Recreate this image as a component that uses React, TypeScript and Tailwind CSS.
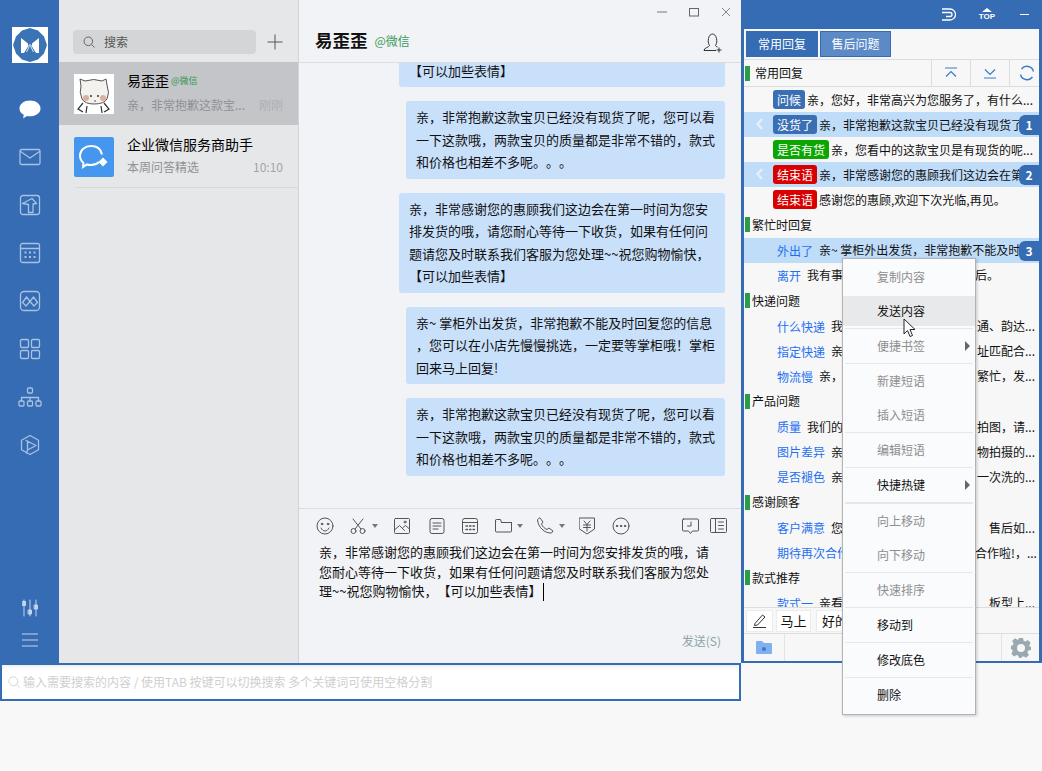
import React from "react";

const SB = "#a9c1e2";

function Ico({ w = 24, h = 24, vb, c = SB, sw = 1.3, children }: { w?: number; h?: number; vb?: string; c?: string; sw?: number; children: React.ReactNode }) {
  return (
    <svg width={w} height={h} viewBox={vb ?? `0 0 ${w} ${h}`} fill="none" stroke={c} strokeWidth={sw} strokeLinecap="round" strokeLinejoin="round">
      {children}
    </svg>
  );
}

const sideIcons = [
  <svg key="chat" width="24" height="24" viewBox="0 0 24 24"><path d="M12 3.500c5.800 0 10.500 3.400 10.500 8s-4.700 7.800-10.500 7.800c-1 0-2 0-3-.3L5.200 21.500l.5-3.700C3 16.400 1.500 14.200 1.500 11.500c0-4.600 4.700-8 10.500-8z" fill="#fff" /></svg>,
  <Ico key="mail" w={22} h={18}><rect x="1" y="1.500" width="20" height="15" rx="1.500" /><path d="M1.500 3.500L11 10l9.500-6.500" /></Ico>,
  <Ico key="up" w={22} h={22}><rect x="1.500" y="1.500" width="19" height="19" rx="2.500" /><path d="M3.500 9.500L13 4.500l4.500 5-3.500.5v8.500H9.500V10.500z" /></Ico>,
  <Ico key="cal" w={22} h={22}><rect x="1.500" y="1.500" width="19" height="19" rx="2" /><path d="M1.500 6.500h19" /><g strokeWidth="2" strokeLinecap="butt"><path d="M5.500 10.500h2M10 10.500h2M14.500 10.500h2M5.500 15h2M10 15h2M14.500 15h2" /></g></Ico>,
  <Ico key="mnt" w={22} h={22}><rect x="1.500" y="1.500" width="19" height="19" rx="3.500" /><path d="M3.500 12.500L7.500 7l3.500 4.500L14.500 7l4 5.500-3.500 3.500-4-4.500-4 4.500zM7.500 7l3.500 4.500" /></Ico>,
  <Ico key="grid" w={22} h={22}><rect x="1.500" y="1.500" width="8" height="8" rx="1.200" /><rect x="12.500" y="1.500" width="8" height="8" rx="1.200" /><rect x="1.500" y="12.500" width="8" height="8" rx="1.200" /><rect x="12.500" y="12.500" width="8" height="8" rx="1.200" /></Ico>,
  <Ico key="org" w={24} h={20}><rect x="9.500" y="1" width="5" height="5" rx="1" /><rect x="1" y="14" width="5" height="5" rx="1" /><rect x="9.500" y="14" width="5" height="5" rx="1" /><rect x="18" y="14" width="5" height="5" rx="1" /><path d="M3.500 14v-3.500h17V14M12 10.500V14" /></Ico>,
  <Ico key="hex" w={20} h={22}><path d="M10 1.500l8.500 4.700v9.600L10 20.500l-8.500-4.700V6.200z" /><path d="M6 6.500l10 5-8.500 4.500v-9M7.500 16l-1 3" /></Ico>,
];

function Tag({ t, c }: { t: string; c?: string }) {
  if (c) {
    return <span className="h-[19px] px-[4px] rounded-[3px] text-white leading-[19px] shrink-0" style={{ backgroundColor: c }}>{t}</span>;
  }
  return <span className="h-[19px] px-[4px] text-[#1d6ff2] leading-[19px] shrink-0">{t}</span>;
}

function Row({ t, c, text, n, chev }: { t: string; c?: string; text: string; n?: number; chev?: boolean }) {
  return (
    <div className={`relative h-[25px] shrink-0 flex items-center gap-[2px] pl-[29px] whitespace-nowrap ${n ? "bg-[#bfdcf9] pr-[20px]" : ""}`}>
      {chev ? <span className="absolute left-[11px] top-[5px]"><svg width="10" height="14" viewBox="0 0 10 14" fill="none" stroke="#e3effc" strokeWidth="2.500"><path d="M7 2L2.500 7 7 12" /></svg></span> : null}
      <Tag t={t} c={c} />
      <span className="min-w-0 overflow-hidden text-[#111]">{text}</span>
      {n ? <span className="absolute right-0 top-[3px] w-[20px] h-[20px] rounded-l-[6px] bg-[#356cb3] text-white font-bold text-center leading-[20px]">{n}</span> : null}
    </div>
  );
}

function HiddenRow({ t, left, tail, tailLeft }: { t: string; left: string; tail: string; tailLeft?: boolean }) {
  return (
    <div className="h-[25px] shrink-0 flex items-center pl-[29px] whitespace-nowrap overflow-hidden">
      <div className="w-[202px] shrink-0 flex items-center gap-[2px] overflow-hidden">
        <Tag t={t} />
        <span className="text-[#111]">{left}</span>
      </div>
      <div className={`shrink-0 flex text-[#111] ${tailLeft ? "w-[64px] justify-start" : "w-[60px] justify-end"}`}>{tail}</div>
    </div>
  );
}

function Section({ t }: { t: string }) {
  return (
    <div className="h-[25.750px] shrink-0 flex items-center pl-[1px] gap-[2px] text-[#111]">
      <span className="w-[5px] h-[15px] bg-[#2a9d48]" />
      <span>{t}</span>
    </div>
  );
}

function Bubble({ w, children }: { w: string; children: React.ReactNode }) {
  return <div className={`${w} shrink-0 rounded-[3px] bg-[#c9e0fb] py-[5px] px-[10px] leading-[22.5px] text-[13px] text-[#111] whitespace-nowrap`}>{children}</div>;
}

function MenuItem({ t, on, hot, arrow }: { t: string; on?: boolean; hot?: boolean; arrow?: boolean }) {
  return (
    <div className={`relative h-[30px] my-[2px] shrink-0 flex items-center pl-[34px] ${on ? "text-[#111]" : "text-[#8e8e8e]"} ${hot ? "bg-[#e8e9ea]" : ""}`}>
      {t}
      {arrow ? <span className="absolute right-[5px] top-[10px] w-0 h-0 border-y-[5px] border-y-transparent border-l-[5px] border-l-[#666]" /> : null}
    </div>
  );
}

const Sep = () => <div className="h-px mx-[2px] shrink-0 bg-[#e6e7e9]" />;

const TI = "#555";

export default function App() {
  return (
    <div className="relative w-[1042px] h-[771px] overflow-hidden bg-[#f8f8f8] font-['Noto_Sans_CJK_SC','Liberation_Sans',sans-serif] text-[12px] [text-spacing-trim:space-all]">
      <div className="flex h-[663px]">
        {/* left window */}
        <div className="flex w-[741px] shrink-0">
          <aside className="w-[59px] shrink-0 bg-[#356cb3] flex flex-col items-center">
            <div className="mt-[27px] w-[36px] h-[36px] bg-white flex items-center justify-center">
              <svg width="36" height="36" viewBox="0 0 36 36">
                <path d="M18 1l8 2.500 6 6 3 8.500-3 8.500-6 6-8 2.500-8-2.500-6-6L1 18l3-8.500 6-6z" fill="#3b74b4" />
                <path d="M9 11l7 5.500v3l-4 6.500H9zM27 11l-7 5.500v3l4 6.500h3z" fill="#fff" />
                <path d="M14.500 25l2.500-5v-2h2v2l2.500 5" fill="none" stroke="#dfe9f5" strokeWidth="1" />
              </svg>
            </div>
            <div className="mt-[22px] flex flex-col items-center">
              {sideIcons.map((ic, i) => (
                <div key={i} className="h-[48px] flex items-center justify-center">{ic}</div>
              ))}
            </div>
            <div className="mt-auto pb-[7px] flex flex-col items-center">
              <div className="h-[32px] flex items-center">
                <Ico w={16} h={18} vb="0 0 16 18" c="#c4d4ea" sw={1}>
                  <path d="M2 1v16M8 1v16M14 1v16" />
                  <rect x="0.500" y="2.500" width="3" height="4" fill="#c4d4ea" />
                  <rect x="6.500" y="11" width="3" height="4" fill="#c4d4ea" />
                  <rect x="12.500" y="6" width="3" height="4" fill="#c4d4ea" />
                </Ico>
              </div>
              <div className="h-[32px] flex items-center">
                <Ico w={16} h={14} c="#c4d4ea" sw={1}><path d="M0 1h16M0 7h16M0 13h16" /></Ico>
              </div>
            </div>
          </aside>

          <section className="w-[240px] shrink-0 bg-[#e6e7e9] border-r border-r-[#d3d4d6] flex flex-col">
            <div className="mt-[30px] ml-[14px] flex items-center">
              <div className="w-[183px] h-[24px] rounded-[4px] bg-[#d4d5d7] flex items-center pl-[10px] gap-[9px] text-[#555] text-[12px]">
                <svg width="12" height="12" viewBox="0 0 12 12" fill="none" stroke="#666" strokeWidth="1"><circle cx="5.300" cy="5.300" r="4.300" /><path d="M8.500 8.500L11.500 11.500" /></svg>
                搜索
              </div>
              <svg className="ml-[11px]" width="16" height="16" viewBox="0 0 16 16" stroke="#555" strokeWidth="1"><path d="M8 0.500v15M0.500 8h15" /></svg>
            </div>
            <div className="mt-[8px] h-[63px] bg-[#c3c5c9] flex items-center pl-[15px] pr-[15px] relative">
              <div className="w-[40px] h-[40px] shrink-0 bg-white">
                <svg width="40" height="40" viewBox="0 0 40 40">
                  <path d="M6 5l5 2q9-3 17 0l4-2 1 6q3 8 0 14-3 5-13 5-9 0-12-5-3-7-1-13z" fill="#f4f2ef" stroke="#555" strokeWidth="1" />
                  <circle cx="12" cy="24" r="3" fill="#d9b09c" /><circle cx="29" cy="24" r="3" fill="#d9b09c" />
                  <circle cx="17" cy="22" r="1" fill="#333" /><circle cx="24" cy="22" r="1" fill="#333" />
                  <path d="M20 27h2" stroke="#333" strokeWidth="0.800" />
                  <path d="M9 29l-5 6 5 3M30 29l5 6-5 3M13 32l-1 7M27 32l1 7" stroke="#333" strokeWidth="1.200" fill="none" />
                </svg>
              </div>
              <div className="ml-[13px] flex-1 min-w-0 -mt-[1px]">
                <div className="flex items-center h-[22px] -mt-[2px]">
                  <span className="text-[14px] text-black">易歪歪</span>
                  <span className="ml-[2px] text-[9px] text-[#2f9448]">@微信</span>
                </div>
                <div className="flex items-center justify-between mt-[3px] h-[20px]">
                  <span className="text-[#8f9194]">亲，非常抱歉这款宝...</span>
                  <span className="text-[#aeb0b4]">刚刚</span>
                </div>
              </div>
              <div className="absolute left-[16px] right-0 bottom-0 h-px bg-[#c9c5c2]" />
            </div>
            <div className="h-[63px] flex items-center pl-[15px] pr-[15px] relative">
              <div className="w-[40px] h-[40px] shrink-0 rounded-[2px] bg-[#4596ee] flex items-center justify-center">
                <svg width="32" height="28" viewBox="0 0 32 28" fill="none" stroke="#fff" strokeWidth="2">
                  <path d="M21 19c-2 2-5 3-8 3-1.500 0-3 0-4-.5L5 24l.5-4C3 18 2 15 2 12.500 2 7 7 3 13 3s10 3.500 11 8.500" />
                  <path d="M25 14.500l4.500 4.500-4.500 4.500-4.500-4.500z" fill="#fff" stroke="none" />
                </svg>
              </div>
              <div className="ml-[13px] flex-1 min-w-0 -mt-[1px]">
                <div className="text-[14px] text-black h-[22px] leading-[22px] -mt-[2px]">企业微信服务商助手</div>
                <div className="flex items-center justify-between mt-[2px] h-[20px]">
                  <span className="text-[#8f9194]">本周问答精选</span>
                  <span className="text-[#a3a5a8]">10:10</span>
                </div>
              </div>
              <div className="absolute left-[16px] right-0 bottom-0 h-px bg-[#d8d9db]" />
            </div>
          </section>

          <main className="flex-1 min-w-0 bg-[#f1f3f6] flex flex-col">
            <header className="h-[63px] shrink-0 border-b border-b-[#dcdde0] pl-[16px] pr-[15px]">
              <div className="h-[24px] flex items-center justify-end gap-[18px] -mr-[5px]">
                <svg width="10" height="10" viewBox="0 0 10 10" stroke="#777" strokeWidth="1"><path d="M0 5h10" /></svg>
                <svg width="10" height="10" className="ml-[4px]" viewBox="0 0 10 10" fill="none" stroke="#666" strokeWidth="1"><rect x="0.500" y="1.500" width="9" height="7.500" /></svg>
                <svg width="10" height="10" className="ml-[4px]" viewBox="0 0 10 10" stroke="#777" strokeWidth="0.900"><path d="M1 1l8 8M9 1l-8 8" /></svg>
              </div>
              <div className="h-[33px] flex items-center">
                <span className="text-[17.500px] font-bold text-[#111]">易歪歪</span>
                <span className="ml-[7px] mt-[1px] text-[12px] text-[#3c9a5a]">@微信</span>
                <svg className="ml-auto mr-[3px] mt-[5px]" width="20" height="20" viewBox="0 0 20 20" fill="none" stroke="#333" strokeWidth="1">
                  <path d="M1 17.500c0-3 5-3 5.500-5C5 10 5 8 5.500 5.500 6 2.500 8 1 9.500 1s3.500 1.500 4 4.500c.5 2.500.5 4.500-1 7 .2.700 1 1.200 2 1.500M1 17.500h12M16 14.500v5M13.500 17h5" />
                </svg>
              </div>
            </header>
            <div className="flex-1 min-h-0 overflow-hidden flex flex-col items-end gap-[14px] pr-[16px]">
              <div className="w-[326px] h-[24px] shrink-0 rounded-b-[3px] bg-[#c9e0fb] px-[10px] leading-[16px] text-[13px] text-[#111] whitespace-nowrap">【可以加些表情】</div>
              <Bubble w="w-[319px]">亲，非常抱歉这款宝贝已经没有现货了呢，您可以看<br />一下这款哦，两款宝贝的质量都是非常不错的，款式<br />和价格也相差不多呢。。。</Bubble>
              <Bubble w="w-[326px]">亲，非常感谢您的惠顾我们这边会在第一时间为您安<br />排发货的哦，请您耐心等待一下收货，如果有任何问<br />题请您及时联系我们客服为您处理~~祝您购物愉快，<br />【可以加些表情】</Bubble>
              <Bubble w="w-[319px]">亲~ 掌柜外出发货，非常抱歉不能及时回复您的信息<br />，您可以在小店先慢慢挑选，一定要等掌柜哦！掌柜<br />回来马上回复!</Bubble>
              <Bubble w="w-[319px]">亲，非常抱歉这款宝贝已经没有现货了呢，您可以看<br />一下这款哦，两款宝贝的质量都是非常不错的，款式<br />和价格也相差不多呢。。。</Bubble>
            </div>
            <div className="h-[155px] shrink-0 border-t border-t-[#dcdde0] flex flex-col">
              <div className="h-[33px] shrink-0 flex items-center pl-[17px] pr-[14px]">
                <Ico w={18} h={18} c={TI} sw={1}><circle cx="9" cy="9" r="8" /><circle cx="6" cy="7" r="0.800" fill={TI} /><circle cx="12" cy="7" r="0.800" fill={TI} /><path d="M5 11c1 2 2.500 3 4 3s3-1 4-3" /></Ico>
                <span className="ml-[16px]"><Ico w={16} h={16} c={TI} sw={1}><circle cx="3.500" cy="13" r="2.500" /><circle cx="12.500" cy="13" r="2.500" /><path d="M5 11L13 1M11 11L3 1" /></Ico></span>
                <span className="ml-[6px] w-0 h-0 border-x-[3px] border-x-transparent border-t-[4px] border-t-[#777]" />
                <span className="ml-[16px]"><Ico w={16} h={16} c={TI} sw={1}><rect x="0.500" y="0.500" width="15" height="15" rx="1" /><path d="M0.500 12l5-4.500 5 5M9 9.500l2.500-2 4 3.500" /><circle cx="11" cy="4" r="1" /></Ico></span>
                <span className="ml-[19px]"><Ico w={16} h={16} c={TI} sw={1}><rect x="1" y="0.500" width="14" height="15" rx="2" /><path d="M4 5h8M4 8h8M4 11h5" /></Ico></span>
                <span className="ml-[17px]"><Ico w={16} h={16} c={TI} sw={1}><rect x="0.500" y="0.500" width="15" height="15" rx="2" /><path d="M0.500 4.500h15" /><path d="M4 8h1.500M7.500 8H9M11 8h1.500M4 11.500h1.500M7.500 11.500H9M11 11.500h1.500" strokeWidth="1.300" /></Ico></span>
                <span className="ml-[17px]"><Ico w={17} h={15} c={TI} sw={1}><path d="M0.500 3V13a1 1 0 001 1h14a1 1 0 001-1V4.500h-10L5.500 1.500h-4a1 1 0 00-1 1.500zM6.500 4.500h10" /></Ico></span>
                <span className="ml-[5px] w-0 h-0 border-x-[3px] border-x-transparent border-t-[4px] border-t-[#777]" />
                <span className="ml-[14px]"><Ico w={17} h={17} c={TI} sw={1}><path d="M3 1l3 4-1.500 2c1 2.500 3 4.500 5.500 5.500l2-1.500 4 3-1.500 2c-7 .5-13.500-6-14-13z" /></Ico></span>
                <span className="ml-[5px] w-0 h-0 border-x-[3px] border-x-transparent border-t-[4px] border-t-[#777]" />
                <span className="ml-[14px]"><Ico w={16} h={18} c={TI} sw={1}><path d="M0.500 1h15v11L8 17 0.500 12z" /><path d="M5 4l3 3.500L11 4M4.500 8h7M4.500 10.500h7M8 7.500V14" /></Ico></span>
                <span className="ml-[17px]"><Ico w={18} h={18} c={TI} sw={1}><circle cx="9" cy="9" r="8" /><circle cx="5" cy="9" r="0.700" fill={TI} /><circle cx="9" cy="9" r="0.700" fill={TI} /><circle cx="13" cy="9" r="0.700" fill={TI} /></Ico></span>
                <span className="ml-auto"><Ico w={17} h={16} c={TI} sw={1}><path d="M1.500 1h14a1 1 0 011 1v10a1 1 0 01-1 1h-5L8.500 15.500 6.500 13h-5a1 1 0 01-1-1V2a1 1 0 011-1z" /><path d="M9 4v4H5.500" /></Ico></span>
                <span className="ml-[11px]"><Ico w={17} h={15} c={TI} sw={1}><rect x="0.500" y="0.500" width="16" height="14" rx="1" /><path d="M5.500 0.500v14M8.500 4h5M8.500 7.500h5M8.500 11h5" /></Ico></span>
              </div>
              <div className="pl-[20px] text-[13px] leading-[19.500px] text-[#111] whitespace-nowrap">
                亲，非常感谢您的惠顾我们这边会在第一时间为您安排发货的哦，请<br />
                您耐心等待一下收货，如果有任何问题请您及时联系我们客服为您处<br />
                理~~祝您购物愉快，【可以加些表情】<span className="ml-[2px] inline-block w-px h-[18px] align-middle bg-black" />
              </div>
              <div className="mt-auto pb-[13px] pr-[20px] text-right text-[#8ba4a6] text-[12px]">发送(S)</div>
            </div>
          </main>
        </div>

        {/* right panel */}
        <div className="flex-1 min-w-0 bg-[#356cb3] flex flex-col px-[3px] pb-[2px]">
          <div className="h-[29px] shrink-0 flex items-center justify-end pr-[10px]">
            <svg width="15" height="13" viewBox="0 0 15 13" fill="none" stroke="#fff" strokeWidth="1.300" className="mr-[22px]">
              <path d="M1 1h8a5.500 5.500 0 010 11H1M1 4.500h8a2 2 0 010 4H5" />
            </svg>
            <div className="flex flex-col items-center mr-[24px] text-white w-[18px]">
              <span className="w-0 h-0 border-x-[5px] border-x-transparent border-b-[4px] border-b-white" />
              <span className="text-[8px] leading-[8px] font-bold mt-[1px] font-['Liberation_Sans',sans-serif]">TOP</span>
            </div>
            <span className="w-[9px] h-px bg-white" />
          </div>
          <div className="flex-1 min-h-0 bg-[#f7f7f7] flex flex-col">
            <div className="pt-[2px] pl-[2px] h-[31px] shrink-0 flex gap-[2px] border-b border-b-[#dcdddf]">
              <div className="w-[72px] h-[26px] bg-[#356cb3] text-white text-center leading-[26px]">常用回复</div>
              <div className="w-[71px] h-[26px] bg-[#5b8ac7] border border-[#356cb3] text-white text-center leading-[24px]">售后问题</div>
            </div>
            <div className="h-[27px] shrink-0 flex items-center pl-[1px] border-b border-b-[#dcdddf] text-[#111]">
              <span className="w-[5px] h-[15px] bg-[#2a9d48]" />
              <span className="ml-[5px]">常用回复</span>
              <div className="ml-auto h-full flex">
                <div className="w-[39px] border-l border-l-[#dcdddf] flex items-center justify-center">
                  <svg width="14" height="12" viewBox="0 0 14 12" fill="none" stroke="#3a7bc8" strokeWidth="1.200"><path d="M1 1h12M2 9.500l5-5 5 5" /></svg>
                </div>
                <div className="w-[39px] border-l border-l-[#dcdddf] flex items-center justify-center">
                  <svg width="14" height="12" viewBox="0 0 14 12" fill="none" stroke="#3a7bc8" strokeWidth="1.200"><path d="M1 11h12M2 2.500l5 5 5-5" /></svg>
                </div>
                <div className="w-[30px] border-l border-l-[#dcdddf] flex items-center justify-end pr-[4px]">
                  <svg width="16" height="16" viewBox="0 0 16 16" fill="none" stroke="#3a7bc8" strokeWidth="1.400"><path d="M14.500 6.500A6.800 6.800 0 002.500 4M1.500 9.500A6.800 6.800 0 0013.500 12" /></svg>
                </div>
              </div>
            </div>
            <div className="flex-1 min-h-0 overflow-hidden flex flex-col">
              <Row t="问候" c="#3a6fb4" text="亲，您好，非常高兴为您服务了，有什么..." />
              <Row t="没货了" c="#3a6fb4" text="亲，非常抱歉这款宝贝已经没有现货了呢，您" n={1} chev />
              <Row t="是否有货" c="#0ba600" text="亲，您看中的这款宝贝是有现货的呢..." />
              <Row t="结束语" c="#d80000" text="亲，非常感谢您的惠顾我们这边会在第一时间" n={2} chev />
              <Row t="结束语" c="#d80000" text="感谢您的惠顾,欢迎下次光临,再见。" />
              <Section t="繁忙时回复" />
              <Row t="外出了" text="亲~ 掌柜外出发货，非常抱歉不能及时回复您" n={3} />
              <HiddenRow t="离开" left="我有事" tail="后。" tailLeft />
              <Section t="快递问题" />
              <HiddenRow t="什么快递" left="我" tail="通、韵达..." />
              <HiddenRow t="指定快递" left="亲" tail="址匹配合..." />
              <HiddenRow t="物流慢" left="亲，" tail="繁忙，发..." />
              <Section t="产品问题" />
              <HiddenRow t="质量" left="我们的" tail="拍图，请..." />
              <HiddenRow t="图片差异" left="亲" tail="物拍摄的..." />
              <HiddenRow t="是否褪色" left="亲" tail="一次洗的..." />
              <Section t="感谢顾客" />
              <HiddenRow t="客户满意" left="您" tail="售后如..." />
              <HiddenRow t="期待再次合作" left="" tail="合作啦!，..." tailLeft />
              <Section t="款式推荐" />
              <HiddenRow t="款式一" left="亲看" tail="板型上..." />
            </div>
            <div className="h-[26px] shrink-0 border-t border-t-[#dcdddf] flex items-center pl-[2px] gap-[3px] text-[13px] text-[#111] bg-[#f7f7f7]">
              <div className="w-[27px] h-[22px] bg-white border border-[#ececec] flex items-center justify-center">
                <svg width="15" height="15" viewBox="0 0 15 15" fill="none" stroke="#333" strokeWidth="1"><path d="M3 10.500L10.500 2l2.500 2-7.500 8-3 .5zM1 14.500h13" /></svg>
              </div>
              <div className="w-[35px] h-[22px] bg-white border border-[#ececec] text-center leading-[20px]">马上</div>
              <div className="ml-[2px] w-[60px] h-[22px] bg-white border border-[#ececec] pl-[5px] leading-[20px]">好的</div>
            </div>
            <div className="h-[28px] shrink-0 border-t border-t-[#dcdddf] flex items-center">
              <div className="w-[41px] h-full border-r border-r-[#e2e3e5] flex items-center justify-center">
                <svg width="16" height="13" viewBox="0 0 16 13"><path d="M0 1a1 1 0 011-1h5l2 2h7a1 1 0 011 1v9a1 1 0 01-1 1H1a1 1 0 01-1-1z" fill="#7fb0f0" /><circle cx="8" cy="8" r="2" fill="#3d78c8" /></svg>
              </div>
              <div className="ml-auto w-[38px] h-full border-l border-l-[#e2e3e5] flex items-center justify-center">
                <svg width="20" height="20" viewBox="0 0 20 20"><path fillRule="evenodd" fill="#9aa8b0" d="M8 0h4l.6 2.800 1.900.8 2.400-1.500 2.800 2.800-1.500 2.400.8 1.900L20 8v4l-2.800.6-.8 1.900 1.500 2.400-2.800 2.800-2.400-1.500-1.900.8L10.200 20H8l-.6-2.200-1.900-.8-2.400 1.500L.3 15.700l1.500-2.400-.8-1.900L-1 10.800V8l2.800-.6.8-1.900L1.100 3.100 3.900.3l2.400 1.500 1.200-.6zM10 6a4 4 0 100 8 4 4 0 000-8z" /></svg>
              </div>
            </div>
          </div>
        </div>
      </div>

      {/* bottom search */}
      <div className="w-[741px] h-[38px] border-2 border-[#356cb3] bg-white flex items-center pl-[6px] gap-[3px] text-[#cfcfcf] shadow-[inset_0_5px_5px_-3px_rgba(0,0,0,0.08)] whitespace-nowrap">
        <svg width="12" height="12" viewBox="0 0 12 12" fill="none" stroke="#d5d5d5" strokeWidth="1"><circle cx="5.300" cy="5.300" r="4.500" /><path d="M8.500 8.500L11.500 11.500" /></svg>
        输入需要搜索的内容 / 使用TAB 按键可以切换搜索 多个关键词可使用空格分割
      </div>

      {/* context menu */}
      <div className="absolute left-[842px] top-[258px] w-[134px] h-[457px] bg-[#fafbfd] border border-[#b3b3b3] pt-[1px] flex flex-col shadow-[1px_1px_3px_rgba(0,0,0,0.2)] text-[12px]">
        <MenuItem t="复制内容" />
        <MenuItem t="发送内容" on hot />
        <Sep />
        <MenuItem t="便捷书签" arrow />
        <Sep />
        <MenuItem t="新建短语" />
        <MenuItem t="插入短语" />
        <Sep />
        <MenuItem t="编辑短语" />
        <Sep />
        <MenuItem t="快捷热键" on arrow />
        <div className="h-[2px] mx-[2px] shrink-0 bg-[#e6e7e9]" />
        <MenuItem t="向上移动" />
        <MenuItem t="向下移动" />
        <Sep />
        <MenuItem t="快速排序" />
        <Sep />
        <MenuItem t="移动到" on />
        <Sep />
        <MenuItem t="修改底色" on />
        <Sep />
        <MenuItem t="删除" on />
      </div>

      {/* cursor */}
      <svg className="absolute left-[903px] top-[318px]" width="14" height="20" viewBox="0 0 14 20">
        <path d="M1 1v15l3.500-3.500 2.500 6 2.500-1-2.500-6h5z" fill="#fff" stroke="#222" strokeWidth="1" />
      </svg>
    </div>
  );
}
